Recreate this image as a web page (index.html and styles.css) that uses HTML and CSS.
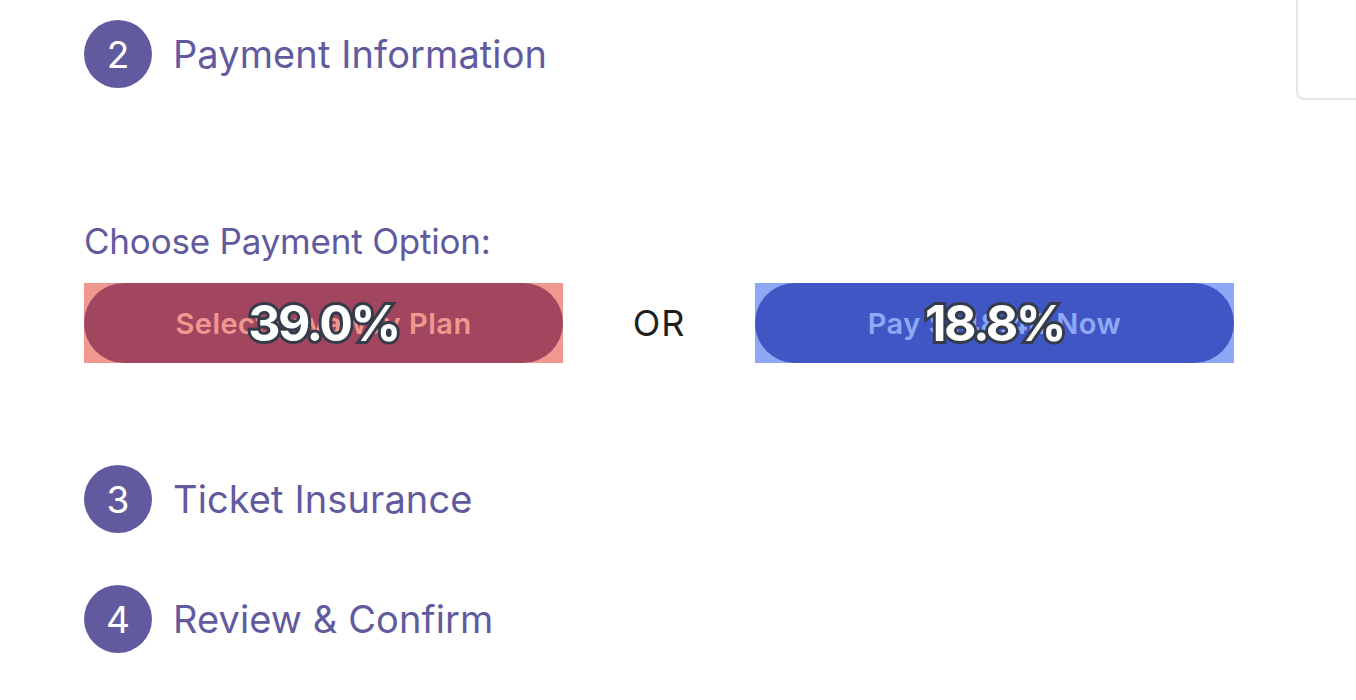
FILE: index.html
```html
<!DOCTYPE html>
<html lang="en">
<head>
<meta charset="utf-8">
<title>Payment Information</title>
<link rel="stylesheet" href="styles.css">
</head>
<body>
<div class="page">
  <main class="main">
    <div class="step step-first">
      <span class="step-num">2</span>
      <span class="step-title">Payment Information</span>
    </div>

    <section class="options">
      <h2 class="options-title">Choose Payment Option:</h2>
      <div class="options-row">
        <div class="btn-wrap">
          <button class="pay-btn">Select Layaway Plan</button>
          <div class="heat heat-red"></div>
          <div class="heat-label">39.0%</div>
        </div>
        <div class="or">OR</div>
        <div class="btn-wrap">
          <button class="pay-btn">Pay $148.44 Now</button>
          <div class="heat heat-blue"></div>
          <div class="heat-label">18.8%</div>
        </div>
      </div>
    </section>

    <div class="step step-third">
      <span class="step-num">3</span>
      <span class="step-title">Ticket Insurance</span>
    </div>
    <div class="step step-fourth">
      <span class="step-num">4</span>
      <span class="step-title">Review &amp; Confirm</span>
    </div>
  </main>
  <aside class="aside"></aside>
</div>
</body>
</html>
```

FILE: styles.css
```css
html, body {
  margin: 0;
  padding: 0;
  background: #ffffff;
}

body {
  font-family: "Inter", "Liberation Sans", sans-serif;
  color: #625a9e;
  overflow: hidden;
}

.page {
  display: flex;
  align-items: flex-start;
  width: 1356px;
  height: 700px;
}

.main {
  flex: 1;
  padding-left: 84px;
}

.aside {
  width: 58px;
  height: 98px;
  border-left: 2px solid #e4e4e4;
  border-bottom: 2px solid #e4e4e4;
  border-bottom-left-radius: 8px;
}

.step {
  display: flex;
  align-items: center;
  gap: 21px;
  height: 68px;
}

.step-first {
  margin-top: 20px;
}

.step-third {
  margin-top: 102px;
}

.step-fourth {
  margin-top: 52px;
}

.step-num {
  width: 68px;
  height: 68px;
  border-radius: 50%;
  background: #625a9e;
  color: #ffffff;
  font-size: 37px;
  display: flex;
  align-items: center;
  justify-content: center;
}

.step-title {
  font-size: 38px;
  letter-spacing: 0.1px;
  color: #625a9e;
}

.options {
  margin-top: 132px;
}

.options-title {
  margin: 0;
  font-size: 35px;
  font-weight: 400;
  letter-spacing: -0.2px;
  color: #625a9e;
}

.options-row {
  display: flex;
  align-items: center;
  margin-top: 21px;
}

.btn-wrap {
  position: relative;
  width: 479px;
  height: 80px;
}

.pay-btn {
  width: 100%;
  height: 100%;
  border: none;
  border-radius: 40px;
  background: #625a9e;
  color: #ffffff;
  font-family: "Inter", "Liberation Sans", sans-serif;
  font-size: 29px;
  font-weight: 600;
  letter-spacing: 0.5px;
  padding: 0;
}

.heat {
  position: absolute;
  inset: 0;
}

.heat-red {
  background: rgba(226, 48, 32, 0.5);
}

.heat-blue {
  background: rgba(32, 82, 236, 0.5);
}

.heat-label {
  position: absolute;
  inset: 0;
  display: flex;
  align-items: center;
  justify-content: center;
  font-family: "Inter", "Liberation Sans", sans-serif;
  font-weight: 700;
  font-size: 50px;
  letter-spacing: -2.5px;
  color: #ffffff;
  -webkit-text-stroke: 6px #333c48;
  paint-order: stroke fill;
}

.or {
  width: 192px;
  text-align: center;
  font-size: 36px;
  letter-spacing: 1px;
  color: #1f1f1f;
}
```
